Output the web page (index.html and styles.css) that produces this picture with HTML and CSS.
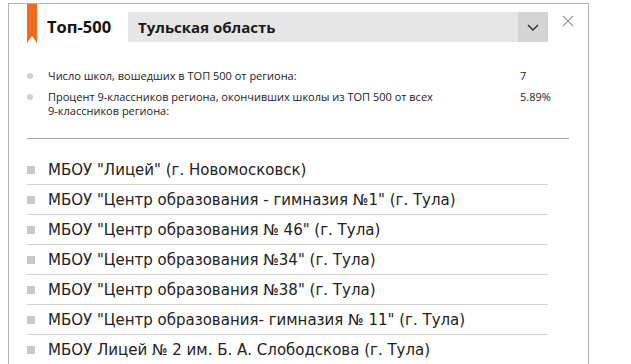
FILE: index.html
```html
<!DOCTYPE html>
<html lang="ru">
<head>
<meta charset="utf-8">
<link rel="stylesheet" href="styles.css">
</head>
<body>
<div class="panel">
  <div class="header">
    <div class="bookmark"></div>
    <div class="title">Топ-500</div>
    <div class="select">
      <span class="select-text">Тульская область</span>
      <span class="select-arrow">
        <svg width="12" height="7" viewBox="0 0 12 7"><path d="M1 1 L6 6 L11 1" fill="none" stroke="#2a2a2a" stroke-width="1.4"/></svg>
      </span>
    </div>
    <div class="close">
      <svg width="12" height="12" viewBox="0 0 12 12"><path d="M1 1 L11 11 M11 1 L1 11" fill="none" stroke="#9a9a9a" stroke-width="1.2"/></svg>
    </div>
  </div>
  <div class="stats">
    <div class="stat">
      <span class="dot"></span>
      <span class="label">Число школ, вошедших в ТОП 500 от региона:</span>
      <span class="value">7</span>
    </div>
    <div class="stat">
      <span class="dot"></span>
      <span class="label">Процент 9-классников региона, окончивших школы из ТОП 500 от всех <span class="nowrap">9-классников</span> региона:</span>
      <span class="value">5.89%</span>
    </div>
  </div>
  <ul class="schools">
    <li>МБОУ "Лицей" (г. Новомосковск)</li>
    <li>МБОУ "Центр образования - гимназия №1" (г. Тула)</li>
    <li>МБОУ "Центр образования № 46" (г. Тула)</li>
    <li>МБОУ "Центр образования №34" (г. Тула)</li>
    <li>МБОУ "Центр образования №38" (г. Тула)</li>
    <li>МБОУ "Центр образования- гимназия № 11" (г. Тула)</li>
    <li>МБОУ Лицей № 2 им. Б. А. Слободскова (г. Тула)</li>
  </ul>
</div>
</body>
</html>
```
FILE: styles.css
```css
html, body {
  margin: 0;
  padding: 0;
  background: #fff;
}
body {
  padding: 3px 0 0 8px;
  font-family: "Open Sans", "Noto Sans", sans-serif;
  color: #222;
  overflow: hidden;
}
.panel {
  width: 579px;
  border: 1px solid #b3b3b3;
  border-bottom: none;
  height: 370px;
  box-sizing: content-box;
}
.header {
  display: flex;
  align-items: flex-start;
  padding-left: 18px;
}
.bookmark {
  width: 10px;
  height: 39px;
  background: #f26a1b;
  clip-path: polygon(0 0, 100% 0, 100% 100%, 50% 82%, 0 100%);
}
.title {
  margin-left: 10px;
  margin-top: 8px;
  height: 30px;
  line-height: 30px;
  font-weight: 700;
  font-size: 16.5px;
  color: #111;
  width: 81px;
}
.select {
  margin-top: 8px;
  width: 420px;
  height: 30px;
  background: #e6e6e6;
  display: flex;
  align-items: center;
  justify-content: space-between;
}
.select-text {
  padding-left: 10px;
  font-weight: 700;
  font-size: 15px;
  color: #1a1a1a;
}
.select-arrow {
  width: 30px;
  height: 30px;
  background: #d4d4d4;
  display: flex;
  align-items: center;
  justify-content: center;
}
.close {
  margin-left: 14px;
  margin-top: 11px;
  display: flex;
}
.stats {
  margin: 26px 19px 0 18px;
  padding-bottom: 20px;
  border-bottom: 1px solid #aaa;
  font-size: 11px;
  color: #222;
}
.stat {
  display: grid;
  grid-template-columns: 21px 472px auto;
  align-items: start;
  line-height: 14px;
  margin-bottom: 7px;
}
.stat:last-child {
  margin-bottom: 0;
}
.dot {
  width: 6px;
  height: 6px;
  border-radius: 50%;
  background: #d0d0d0;
  margin-top: 4px;
}
.label {
  padding-right: 52px;
}
.nowrap {
  white-space: nowrap;
}
.schools {
  list-style: none;
  margin: 16px 0 0 18px;
  padding: 0;
  width: 521px;
  font-family: "DejaVu Sans", Verdana, sans-serif;
  font-size: 15px;
  color: #222;
}
.schools li {
  display: flex;
  align-items: center;
  height: 29px;
  border-bottom: 1px solid #d2d2d2;
}
.schools li::before {
  content: "";
  width: 8px;
  height: 8px;
  background: #c8c8c8;
  margin-right: 13px;
  flex: none;
}
```
